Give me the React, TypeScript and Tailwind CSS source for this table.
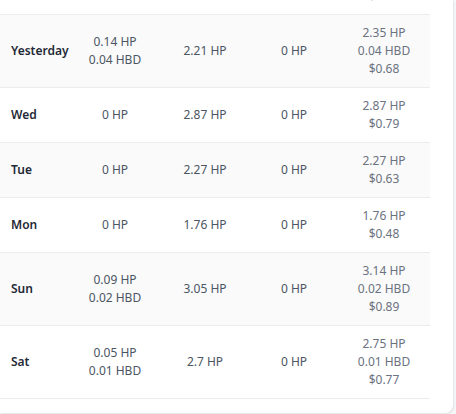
const rows = [
  { day: "Thu", author: ["0 HP"], curation: ["2.4 HP"], benefactor: ["0 HP"], total: ["2.4 HP", "0.01 HBD", "$0.66"] },
  { day: "Yesterday", author: ["0.14 HP", "0.04 HBD"], curation: ["2.21 HP"], benefactor: ["0 HP"], total: ["2.35 HP", "0.04 HBD", "$0.68"] },
  { day: "Wed", author: ["0 HP"], curation: ["2.87 HP"], benefactor: ["0 HP"], total: ["2.87 HP", "$0.79"] },
  { day: "Tue", author: ["0 HP"], curation: ["2.27 HP"], benefactor: ["0 HP"], total: ["2.27 HP", "$0.63"] },
  { day: "Mon", author: ["0 HP"], curation: ["1.76 HP"], benefactor: ["0 HP"], total: ["1.76 HP", "$0.48"] },
  { day: "Sun", author: ["0.09 HP", "0.02 HBD"], curation: ["3.05 HP"], benefactor: ["0 HP"], total: ["3.14 HP", "0.02 HBD", "$0.89"] },
  { day: "Sat", author: ["0.05 HP", "0.01 HBD"], curation: ["2.7 HP"], benefactor: ["0 HP"], total: ["2.75 HP", "0.01 HBD", "$0.77"] },
];

const Cell = ({ lines, muted }: { lines: string[]; muted?: boolean }) => (
  <div className={`flex flex-col items-center justify-center text-center ${muted ? "text-[#6b7280]" : "text-[#4b5563]"}`}>
    {lines.map((l) => (
      <span key={l}>{l}</span>
    ))}
  </div>
);

export default function App() {
  return (
    <div className="h-[414px] w-[456px] overflow-hidden bg-[#f5f6f7]">
      <div
        className="h-[413px] w-[453px] overflow-hidden rounded-br-lg bg-white pr-[23px] shadow-[1px_1px_2px_rgba(0,0,0,0.08)]"
        style={{ fontFamily: '"Segoe UI", "Noto Sans", "Open Sans", sans-serif' }}
      >
        <div className="-mt-[58px] text-[12px] leading-[18px]">
          {rows.map((r, i) => (
            <div
              key={r.day}
              className={`grid grid-cols-[70px_90px_90px_88px_92px] border-b border-[#ececee] py-[9px] ${i % 2 === 1 ? "bg-[#fafafa]" : "bg-white"}`}
            >
              <div className="flex items-center pl-[11px] font-semibold text-[#1f2937]">{r.day}</div>
              <Cell lines={r.author} />
              <Cell lines={r.curation} />
              <Cell lines={r.benefactor} />
              <Cell lines={r.total} muted />
            </div>
          ))}
        </div>
      </div>
    </div>
  );
}
